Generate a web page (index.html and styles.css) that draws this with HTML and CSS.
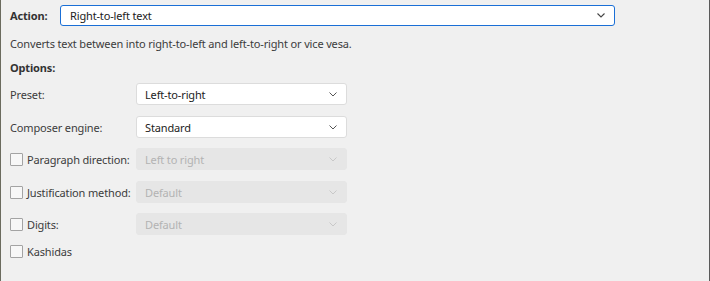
FILE: index.html
```html
<!DOCTYPE html>
<html lang="en">
<head>
    <meta charset="UTF-8">
    <title>Right-to-left text</title>
    <link rel="stylesheet" href="styles.css">
</head>
<body>
    <div class="panel">
        <div class="action-row">
            <span class="bold-label action-label">Action:</span>
            <div class="combo combo-focus">
                <span>Right-to-left text</span>
                <svg class="chevron" width="8" height="5" viewBox="0 0 8 5"><path d="M0.5 0.5 L4 4 L7.5 0.5" fill="none" stroke="#444" stroke-width="1.1"/></svg>
            </div>
        </div>
        <p class="desc">Converts text between into right-to-left and left-to-right or vice vesa.</p>
        <p class="bold-label options">Options:</p>

        <div class="row r1">
            <span class="label">Preset:</span>
            <div class="combo">
                <span>Left-to-right</span>
                <svg class="chevron" width="8" height="5" viewBox="0 0 8 5"><path d="M0.5 0.5 L4 4 L7.5 0.5" fill="none" stroke="#555" stroke-width="1"/></svg>
            </div>
        </div>
        <div class="row r2">
            <span class="label">Composer engine:</span>
            <div class="combo">
                <span>Standard</span>
                <svg class="chevron" width="8" height="5" viewBox="0 0 8 5"><path d="M0.5 0.5 L4 4 L7.5 0.5" fill="none" stroke="#555" stroke-width="1"/></svg>
            </div>
        </div>
        <div class="row r3">
            <label class="label check"><span class="box"></span>Paragraph direction:</label>
            <div class="combo disabled">
                <span>Left to right</span>
                <svg class="chevron" width="8" height="5" viewBox="0 0 8 5"><path d="M0.5 0.5 L4 4 L7.5 0.5" fill="none" stroke="#c8c8c8" stroke-width="1"/></svg>
            </div>
        </div>
        <div class="row r4">
            <label class="label check"><span class="box"></span>Justification method:</label>
            <div class="combo disabled">
                <span>Default</span>
                <svg class="chevron" width="8" height="5" viewBox="0 0 8 5"><path d="M0.5 0.5 L4 4 L7.5 0.5" fill="none" stroke="#c8c8c8" stroke-width="1"/></svg>
            </div>
        </div>
        <div class="row r5">
            <label class="label check"><span class="box"></span>Digits:</label>
            <div class="combo disabled">
                <span>Default</span>
                <svg class="chevron" width="8" height="5" viewBox="0 0 8 5"><path d="M0.5 0.5 L4 4 L7.5 0.5" fill="none" stroke="#c8c8c8" stroke-width="1"/></svg>
            </div>
        </div>
        <div class="row kash">
            <label class="label check"><span class="box"></span>Kashidas</label>
        </div>
    </div>
</body>
</html>
```

FILE: styles.css
```css
html, body {
    margin: 0;
    padding: 0;
    background-color: #f0f0f0;
}
body {
    font-family: "Noto Sans", "Open Sans", sans-serif;
    font-size: 11px;
    letter-spacing: -0.15px;
    color: #333;
}
.panel {
    box-sizing: border-box;
    width: 710px;
    height: 281px;
    border-left: 1px solid #6b6b5e;
    border-right: 1px solid #5a5a5a;
    padding: 5px 94px 0 9px;
}
.action-row {
    display: flex;
    align-items: center;
}
.action-label {
    width: 50px;
}
.bold-label {
    font-weight: bold;
    color: #333;
}
.desc {
    margin: 10px 0 0;
    line-height: 16px;
    color: #3c3c3c;
}
.options {
    margin: 8px 0 0;
    line-height: 16px;
}
.row {
    display: flex;
    align-items: center;
    width: 337px;
    height: 22px;
}
.r1 { margin-top: 7px; }
.r2 { margin-top: 11px; }
.r3 { margin-top: 10px; }
.r4 { margin-top: 11px; }
.r5 { margin-top: 10px; }
.kash { margin-top: 5px; }
.label {
    width: 126px;
    flex: none;
    white-space: nowrap;
    color: #3c3c3c;
}
.check {
    display: flex;
    align-items: center;
    gap: 4px;
}
.box {
    box-sizing: border-box;
    flex: none;
    width: 13px;
    height: 13px;
    border: 1px solid #a3a3a3;
    border-radius: 1px;
    background-color: #f7f7f7;
}
.combo {
    box-sizing: border-box;
    flex: 1;
    height: 22px;
    display: flex;
    align-items: center;
    justify-content: space-between;
    padding: 0 9px 0 8px;
    background-color: #fff;
    border: 1px solid #dcdcdc;
    border-radius: 3px;
    color: #222;
}
.combo-focus {
    height: 21px;
    border-color: #1a6fd6;
    padding-left: 9px;
}
.disabled {
    background-color: #e6e6e6;
    border-color: #e6e6e6;
    color: #b3b3b3;
}
.chevron {
    flex: none;
}
```
